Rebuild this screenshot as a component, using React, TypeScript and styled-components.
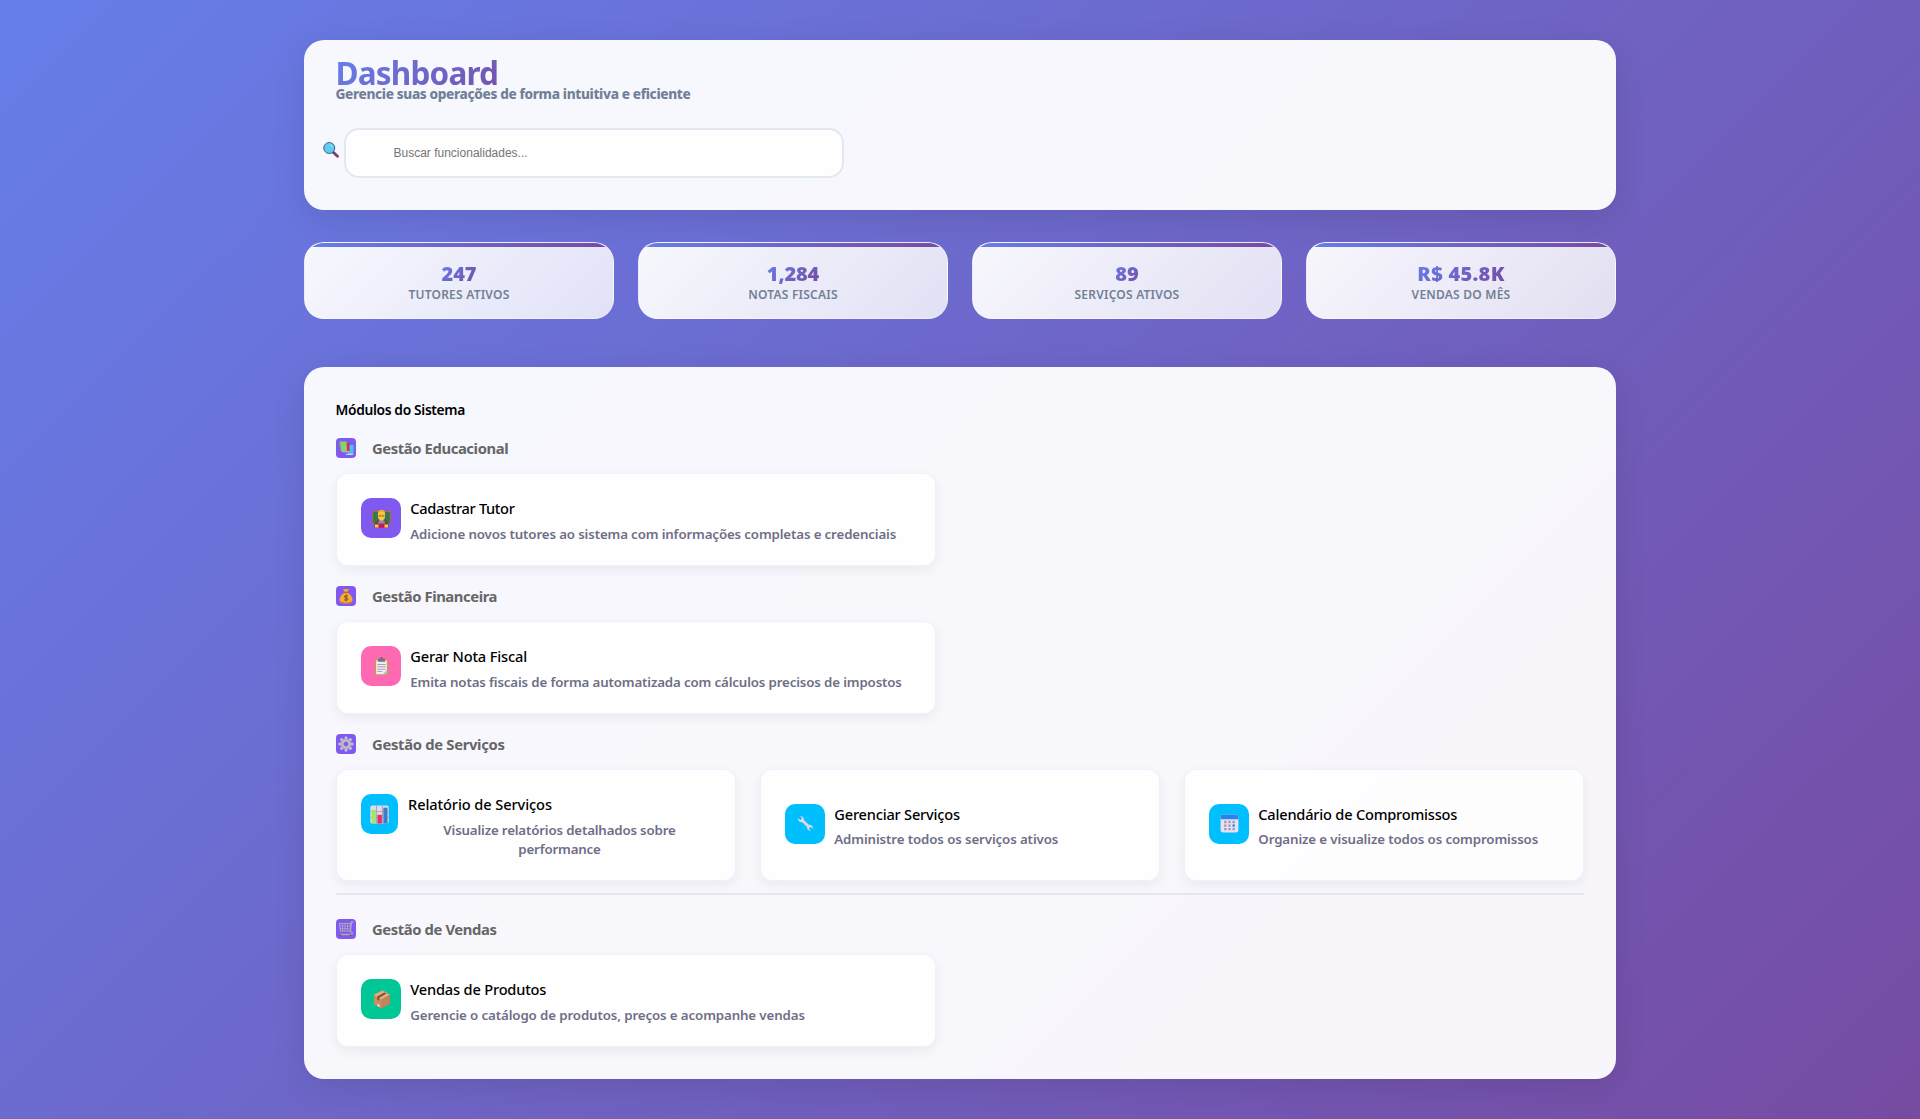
import React from 'react';
import styled, { createGlobalStyle } from 'styled-components';

const GlobalStyle = createGlobalStyle`
  * { box-sizing: border-box; margin: 0; padding: 0; }
  body {
    font-family: "Noto Sans", "Open Sans", sans-serif;
    background: linear-gradient(135deg, #667eea 0%, #764ba2 100%);
    min-height: 100vh;
  }
`;

const Page = styled.main`
  min-height: 1119px;
  width: 1312px;
  margin: 0 auto;
  padding: 40px 0;
`;

const Panel = styled.section`
  background: rgba(255, 255, 255, 0.95);
  border-radius: 20px;
  box-shadow: 0 8px 32px rgba(0, 0, 0, 0.1);
`;

const Header = styled(Panel)`
  height: 170px;
  padding: 17px 32px 0;
`;

const Title = styled.h1`
  width: 200px;
  margin-left: -0.5px;
  font-size: 31.5px;
  font-weight: 700;
  line-height: 32px;
  letter-spacing: -0.82px;
  color: transparent;
  background: linear-gradient(135deg, #667eea, #764ba2);
  background-clip: text;
  -webkit-background-clip: text;
`;

const Subtitle = styled.p`
  margin: -5px 0 0 -0.5px;
  font-size: 13.6px;
  font-weight: 800;
  line-height: 19px;
  letter-spacing: -0.36px;
  color: #718096;
`;

const SearchRow = styled.div`
  display: flex;
  align-items: center;
  gap: 5px;
  margin: 25px 0 0 -13px;
  & > svg { margin-bottom: 6px; }
`;

const SearchInput = styled.input`
  width: 500px;
  height: 50px;
  padding: 0 20px 0 47.5px;
  border: 2px solid #e2e8f0;
  border-radius: 15px;
  background: rgba(255, 255, 255, 0.8);
  font: 12px "Liberation Sans", Arial, sans-serif;
  outline: none;
  &::placeholder { color: #757575; }
`;

const Stats = styled.section`
  display: grid;
  grid-template-columns: repeat(4, 1fr);
  gap: 24px;
  margin: 32px 0 48px;
`;

const StatCard = styled.article`
  display: flex;
  flex-direction: column;
  align-items: center;
  height: 77px;
  border: 1px solid rgba(255, 255, 255, 0.3);
  border-radius: 20px;
  overflow: hidden;
  background: linear-gradient(135deg, rgba(255, 255, 255, 0.95), rgba(255, 255, 255, 0.8));
`;

const StatStripe = styled.div`
  align-self: stretch;
  height: 4px;
  margin-bottom: 15px;
  background: linear-gradient(90deg, #667eea, #764ba2);
`;

const StatValue = styled.strong<{ $track: number }>`
  font-size: 20px;
  font-weight: 900;
  line-height: 24px;
  letter-spacing: ${(p) => p.$track}px;
  color: transparent;
  background: linear-gradient(135deg, #667eea, #764ba2);
  background-clip: text;
  -webkit-background-clip: text;
`;

const StatLabel = styled.span`
  font-size: 12px;
  font-weight: 600;
  line-height: 17px;
  letter-spacing: 0.22px;
  text-transform: uppercase;
  color: #718096;
`;

const Modules = styled(Panel)`
  padding: 33px 32px 32px;
`;

const ModulesTitle = styled.h2`
  margin: 0 0 19px -0.5px;
  font-size: 13.8px;
  font-weight: 600;
  line-height: 19px;
  letter-spacing: -0.34px;
  color: #000;
`;

const Group = styled.section<{ $divider?: boolean }>`
  margin-bottom: ${(p) => (p.$divider ? 24 : 20)}px;
  padding-bottom: ${(p) => (p.$divider ? 12 : 0)}px;
  border-bottom: ${(p) => (p.$divider ? '2px solid #e2e8f0' : '0')};
  &:last-child { margin-bottom: 0; }
`;

const GroupHeader = styled.header`
  display: flex;
  align-items: center;
  gap: 16px;
  height: 20px;
  margin-bottom: 15px;
`;

const GroupIcon = styled.span`
  display: grid;
  place-items: center;
  width: 20px;
  height: 20px;
  border-radius: 4px;
  background: #805af0;
`;

const GroupTitle = styled.h3<{ $track: number }>`
  font-size: 14.8px;
  font-weight: 700;
  line-height: 20px;
  letter-spacing: ${(p) => p.$track}px;
  color: #666;
`;

const CardGrid = styled.div<{ $columns: number }>`
  display: grid;
  grid-template-columns: ${(p) => (p.$columns === 1 ? '600px' : `repeat(${p.$columns}, 1fr)`)};
  gap: 24px;
`;

const Card = styled.article`
  display: flex;
  align-items: center;
  padding: 24px 24px 21.5px;
  border: 1px solid rgba(102, 126, 234, 0.1);
  border-radius: 12px;
  background: rgba(255, 255, 255, 0.8);
  box-shadow: 0 4px 12px rgba(0, 0, 0, 0.06);
`;

const CardBody = styled.div<{ $wrapped?: boolean }>`
  display: flex;
  gap: ${(p) => (p.$wrapped ? 10 : 9.3)}px;
  align-items: flex-start;
`;

const CardIcon = styled.span<{ $color: string; $width: number }>`
  display: grid;
  place-items: center;
  flex: 0 0 ${(p) => p.$width}px;
  height: 40px;
  border-radius: 10px;
  background: ${(p) => p.$color};
`;

const CardTitle = styled.h4<{ $track: number }>`
  font-size: 14.6px;
  font-weight: 500;
  line-height: 20px;
  letter-spacing: ${(p) => p.$track}px;
  color: #000;
`;

const CardText = styled.p<{ $track: number; $wrapped?: boolean }>`
  width: ${(p) => (p.$wrapped ? '303px' : 'auto')};
  padding-top: 6.5px;
  font-size: 13.3px;
  font-weight: 600;
  line-height: 19px;
  letter-spacing: ${(p) => p.$track}px;
  text-align: ${(p) => (p.$wrapped ? 'center' : 'left')};
  white-space: ${(p) => (p.$wrapped ? 'pre-line' : 'nowrap')};
  color: #6e6e86;
`;

type IconName =
  | 'search' | 'books' | 'money' | 'gear' | 'cart'
  | 'teacher' | 'clipboard' | 'chart' | 'wrench' | 'calendar' | 'box';

const drawings: Record<IconName, React.ReactNode> = {
  search: (
    <>
      <path d="M20.5 20.5 29 28.5" stroke="#77427f" strokeWidth="5.8" strokeLinecap="round" />
      <path d="M18.5 18.5 22 22" stroke="#533566" strokeWidth="3" />
      <circle cx="12.5" cy="12" r="11" fill="#5fcbee" stroke="#4c5f92" strokeWidth="2" />
      <path d="M14 6.2a6 6 0 0 1 4.2 4" stroke="#8fe0f6" strokeWidth="2.2" fill="none" strokeLinecap="round" />
    </>
  ),
  books: (
    <>
      <path d="M21 10h10v18H20z" fill="#45c5ee" />
      <path d="M15 27.5h15V30H17z" fill="#b9dff3" />
      <path d="M16 6h7v18h-7z" fill="#d82c55" />
      <path d="M7 22h16v2.5H9z" fill="#c9a6cd" />
      <path d="M2 3h15l1 19H5z" fill="#86d072" />
      <path d="M2 3h2.2l2.2 19H5z" fill="#5b9e62" />
    </>
  ),
  money: (
    <>
      <path d="M10 2c3 1 3-1 6 0s4-1 6 0l-3 6h-6z" fill="#f5a63b" />
      <path d="M12 10h8c6 4 9 9 9 14 0 5-4 7-13 7S3 29 3 24c0-5 3-10 9-14z" fill="#f7ad35" />
      <path d="M4 25c2 3 8 4 12 4s10-1 12-4c0 5-5 6-12 6S4 30 4 25z" fill="#dc7e28" />
      <rect x="10" y="7.5" width="12" height="3" rx="1.5" fill="#b9643a" />
      <path d="M20 16.5c-2-2.2-7.5-1.6-7.2 1.2.3 2.8 7 1.5 7 4.6 0 2.7-5.4 3-7.6.8M16 13.5v13" stroke="#7b4a2c" strokeWidth="2" fill="none" />
    </>
  ),
  gear: (
    <>
      <g stroke="#c4bccf" strokeWidth="6" strokeLinecap="round">
        <path d="M16 3.5v25M3.5 16h25M7.2 7.2l17.6 17.6M24.8 7.2 7.2 24.8" />
      </g>
      <circle cx="16" cy="16" r="9.7" fill="#b2a9c3" />
      <circle cx="16" cy="16" r="7.5" fill="#cdc5d8" />
      <circle cx="16" cy="16" r="4.6" fill="#805af0" stroke="#8d839f" strokeWidth="1.3" />
    </>
  ),
  cart: (
    <>
      <path d="M31 2h-4l-2 18c0 3 4 2 4 5-1 2-3 2-5 2H4" fill="none" stroke="#aca5b8" strokeWidth="2.6" />
      <path d="M3 5h22l-1 15H5z" fill="#805af0" stroke="#aca5b8" strokeWidth="2.4" />
      <path d="M4 10h20M4 15h19M9 5v15M14 5v15M19 5v15" stroke="#aca5b8" strokeWidth="1.6" />
      <circle cx="5" cy="29" r="2" fill="#5e586f" />
      <circle cx="25" cy="29" r="2" fill="#5e586f" />
    </>
  ),
  teacher: (
    <>
      <path d="M0 3h32v23H0z" fill="#a66d48" />
      <path d="M2 5h28v19H2z" fill="#36784f" />
      <path d="M4 31c0-9 4-13 12-13s12 4 12 13z" fill="#754042" />
      <path d="M12 18h8l-1.5 8h-5z" fill="#a99caf" />
      <path d="M10 8c0-8 12-8 12 0v5c0 8-12 8-12 0z" fill="#ffc83d" />
      <path d="M10 8c-1-9 13-9 12 0l-2-3h-8z" fill="#f3ae2b" />
      <path d="M11.5 10.5h3.7v2h-3.7zM16.8 10.5h3.7v2h-3.7z" fill="none" stroke="#a26a28" strokeWidth="1" />
      <path d="M10 24h12v7H10z" fill="#c41659" />
      <path d="M5 26h6v5H5zM21 26h6v5h-6z" fill="#ffc83d" />
      <path d="M10 21h12v3.5H10z" fill="#93889b" />
    </>
  ),
  clipboard: (
    <>
      <rect x="4" y="3" width="24" height="28" rx="1.5" fill="#d4905d" />
      <path d="M7 6h18v20l-3 3H7z" fill="#f1ebf7" />
      <path d="M25 22v7h-7z" fill="#bdb4ca" />
      <path d="M10 3h3c0-4 6-4 6 0h3v5H10z" fill="#79717f" />
      <path d="M9 12.5h14M9 16.5h14M9 20.5h14M9 24.5h8" stroke="#aaa1b7" strokeWidth="1.7" />
    </>
  ),
  chart: (
    <>
      <rect x="0.5" y="1" width="31" height="30" rx="3" fill="#e0daea" />
      <path d="M1 11h30M1 21h30M11 1v30M21 1v30" stroke="#aaa1b8" strokeWidth="1.6" />
      <path d="M3 8h7v23H3z" fill="#9bea67" />
      <path d="M12.5 16.5h7.5V31h-7.5z" fill="#e52d69" />
      <path d="M22.5 4.5h7V31h-7z" fill="#367fce" />
    </>
  ),
  wrench: (
    <>
      <path d="M8 8 24 24" stroke="#ddd5e8" strokeWidth="5.2" />
      <path d="M6 2c6 0 9 6 6 11C6 15 1 11 2 6l5 4 3-3zM26 30c-6 0-9-6-6-11 6-2 11 2 10 7l-5-4-3 3z" fill="#ded6e8" />
    </>
  ),
  calendar: (
    <>
      <rect x="1" y="1" width="30" height="30" rx="4.5" fill="#e9e1f3" />
      <path d="M1 9V5.5A4.5 4.5 0 0 1 5.5 1h21A4.5 4.5 0 0 1 31 5.5V9z" fill="#2684ec" />
      <g fill="#a298b0">
        <path d="M7 11.5h4v4H7zM14 11.5h4v4h-4zM21 11.5h4v4h-4zM7 17.5h4v4H7zM14 17.5h4v4h-4zM7 23.5h4v4H7zM14 23.5h4v4h-4zM21 23.5h4v4h-4z" />
      </g>
      <path d="M21 17.5h4v4h-4z" fill="#208cf2" />
    </>
  ),
  box: (
    <>
      <path d="M3 8 18 1l12 7v15L16 31 3 24z" fill="#ca8c60" />
      <path d="M3 8 18 1l12 7-14 8z" fill="#e3ac7b" />
      <path d="M16 16 30 8v15L16 31z" fill="#c18358" />
      <path d="m9 11 12-7 3 1.8L12 13v5l-3-2z" fill="#74493f" />
      <path d="m9 23 4 2v4l-4-2z" fill="#edd8cb" />
    </>
  ),
};

function Emoji({ name, size }: { name: IconName; size: number }) {
  return (
    <svg width={size} height={size} viewBox="0 0 32 32" fill="none" aria-hidden="true">
      {drawings[name]}
    </svg>
  );
}

const stats = [
  { value: '247', label: 'Tutores Ativos', track: 0 },
  { value: '1,284', label: 'Notas Fiscais', track: -0.15 },
  { value: '89', label: 'Serviços Ativos', track: 0 },
  { value: 'R$ 45.8K', label: 'Vendas do Mês', track: 0.3 },
];

interface CardData {
  icon: IconName;
  color: string;
  title: string;
  track: number;
  text: string;
  textTrack: number;
  wrapped?: boolean;
}

interface GroupData {
  icon: IconName;
  title: string;
  track: number;
  divider?: boolean;
  cards: CardData[];
}

const groups: GroupData[] = [
  {
    icon: 'books', title: 'Gestão Educacional', track: -0.395,
    cards: [
      { icon: 'teacher', color: '#805af0', title: 'Cadastrar Tutor', track: -0.33, text: 'Adicione novos tutores ao sistema com informações completas e credenciais', textTrack: -0.14 },
    ],
  },
  {
    icon: 'money', title: 'Gestão Financeira', track: -0.415,
    cards: [
      { icon: 'clipboard', color: '#ff69b4', title: 'Gerar Nota Fiscal', track: -0.16, text: 'Emita notas fiscais de forma automatizada com cálculos precisos de impostos', textTrack: -0.145 },
    ],
  },
  {
    icon: 'gear', title: 'Gestão de Serviços', track: -0.31, divider: true,
    cards: [
      { icon: 'chart', color: '#00bfff', title: 'Relatório de Serviços', track: -0.09, text: 'Visualize relatórios detalhados sobre\nperformance', textTrack: -0.17, wrapped: true },
      { icon: 'wrench', color: '#00bfff', title: 'Gerenciar Serviços', track: -0.2, text: 'Administre todos os serviços ativos', textTrack: -0.12 },
      { icon: 'calendar', color: '#00bfff', title: 'Calendário de Compromissos', track: -0.21, text: 'Organize e visualize todos os compromissos', textTrack: -0.12 },
    ],
  },
  {
    icon: 'cart', title: 'Gestão de Vendas', track: -0.4,
    cards: [
      { icon: 'box', color: '#00c795', title: 'Vendas de Produtos', track: -0.18, text: 'Gerencie o catálogo de produtos, preços e acompanhe vendas', textTrack: -0.12 },
    ],
  },
];

export default function App() {
  return (
    <>
      <GlobalStyle />
      <Page>
        <Header>
          <Title>Dashboard</Title>
          <Subtitle>Gerencie suas operações de forma intuitiva e eficiente</Subtitle>
          <SearchRow>
            <Emoji name="search" size={16} />
            <SearchInput placeholder="Buscar funcionalidades..." />
          </SearchRow>
        </Header>

        <Stats>
          {stats.map((s) => (
            <StatCard key={s.label}>
              <StatStripe />
              <StatValue $track={s.track}>{s.value}</StatValue>
              <StatLabel>{s.label}</StatLabel>
            </StatCard>
          ))}
        </Stats>

        <Modules>
          <ModulesTitle>Módulos do Sistema</ModulesTitle>
          {groups.map((g) => (
            <Group key={g.title} $divider={g.divider}>
              <GroupHeader>
                <GroupIcon><Emoji name={g.icon} size={16} /></GroupIcon>
                <GroupTitle $track={g.track}>{g.title}</GroupTitle>
              </GroupHeader>
              <CardGrid $columns={g.cards.length}>
                {g.cards.map((c) => (
                  <Card key={c.title}>
                    <CardBody $wrapped={c.wrapped}>
                      <CardIcon $color={c.color} $width={c.wrapped ? 37 : 40}>
                        <Emoji name={c.icon} size={c.icon === 'wrench' ? 17 : 19} />
                      </CardIcon>
                      <div>
                        <CardTitle $track={c.track}>{c.title}</CardTitle>
                        <CardText $track={c.textTrack} $wrapped={c.wrapped}>{c.text}</CardText>
                      </div>
                    </CardBody>
                  </Card>
                ))}
              </CardGrid>
            </Group>
          ))}
        </Modules>
      </Page>
    </>
  );
}
